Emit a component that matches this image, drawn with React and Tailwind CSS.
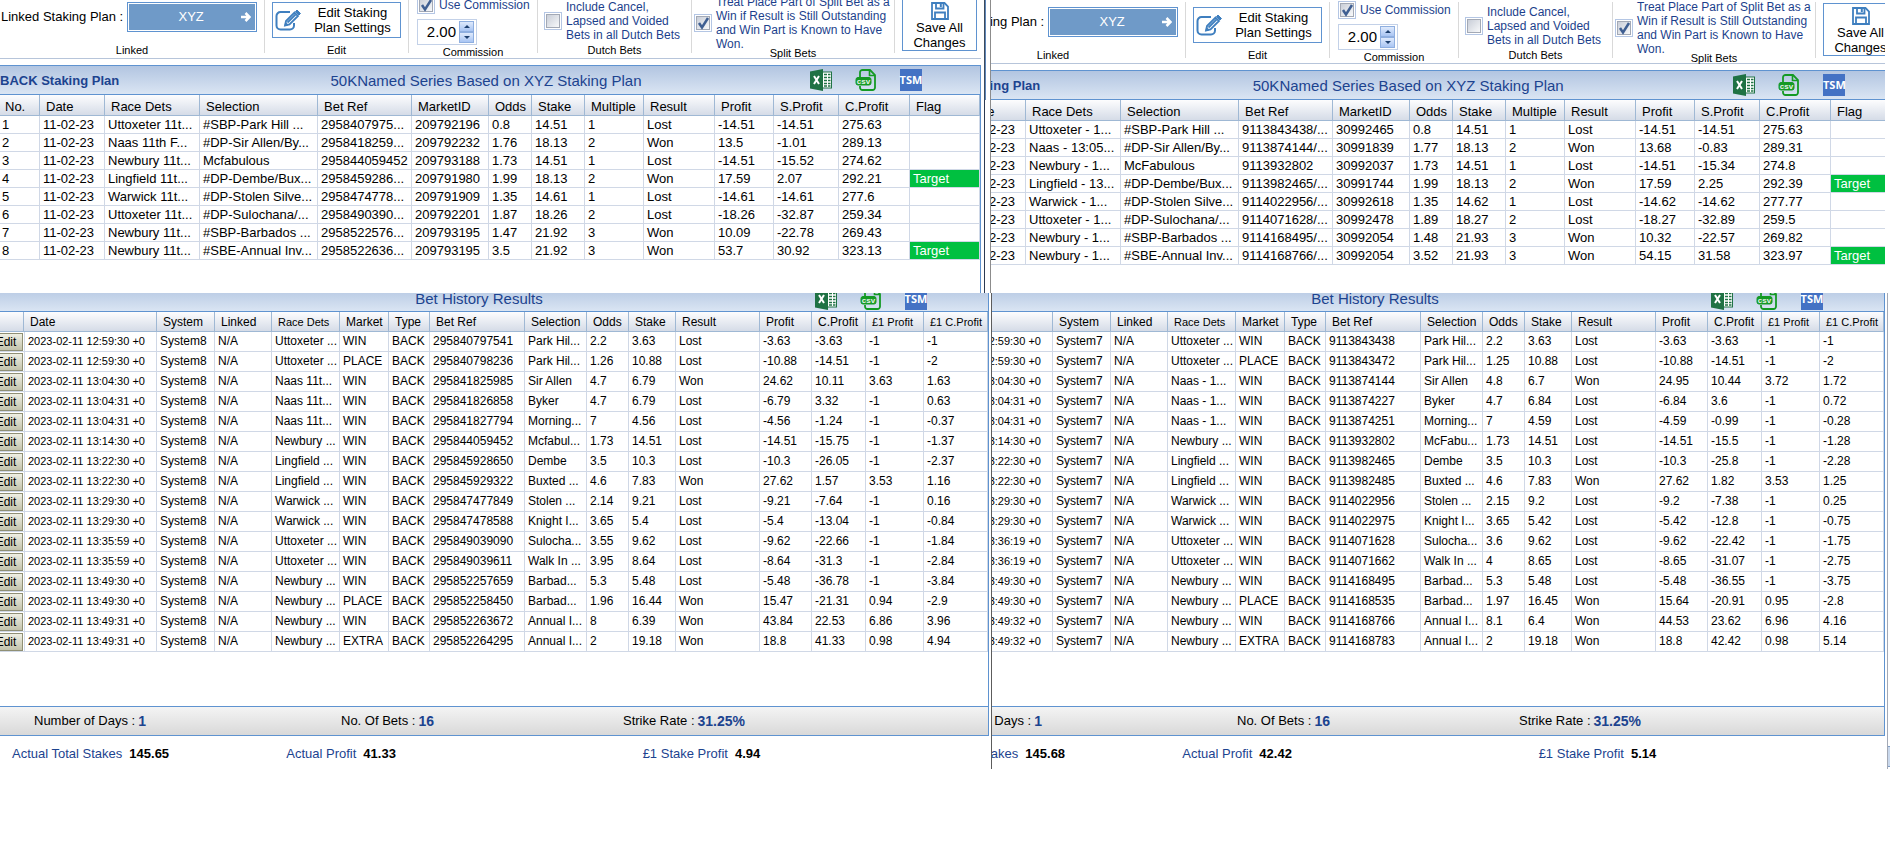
import { useState } from 'react'
import clsx from 'clsx'

const planCols = [
  { label: 'No.', width: 'w-[40px]' },
  { label: 'Date', width: 'w-[65px]' },
  { label: 'Race Dets', width: 'w-[95px]' },
  { label: 'Selection', width: 'w-[118px]' },
  { label: 'Bet Ref', width: 'w-[94px]' },
  { label: 'MarketID', width: 'w-[77px]' },
  { label: 'Odds', width: 'w-[43px]' },
  { label: 'Stake', width: 'w-[53px]' },
  { label: 'Multiple', width: 'w-[59px]' },
  { label: 'Result', width: 'w-[71px]' },
  { label: 'Profit', width: 'w-[59px]' },
  { label: 'S.Profit', width: 'w-[65px]' },
  { label: 'C.Profit', width: 'w-[71px]' },
  { label: 'Flag', width: '' },
]

const historyCols = [
  { label: '', width: 'w-[24px]' },
  { label: 'Date', width: 'w-[133px]' },
  { label: 'System', width: 'w-[58px]' },
  { label: 'Linked', width: 'w-[57px]' },
  { label: 'Race Dets', width: 'w-[68px]', small: true },
  { label: 'Market', width: 'w-[49px]' },
  { label: 'Type', width: 'w-[41px]' },
  { label: 'Bet Ref', width: 'w-[95px]' },
  { label: 'Selection', width: 'w-[62px]' },
  { label: 'Odds', width: 'w-[42px]' },
  { label: 'Stake', width: 'w-[47px]' },
  { label: 'Result', width: 'w-[84px]' },
  { label: 'Profit', width: 'w-[52px]' },
  { label: 'C.Profit', width: 'w-[54px]' },
  { label: '£1 Profit', width: 'w-[58px]', small: true },
  { label: '£1 C.Profit', width: '', small: true },
]

const planA = [
  ['1', '11-02-23', 'Uttoxeter 11t...', '#SBP-Park Hill ...', '2958407975...', '209792196', '0.8', '14.51', '1', 'Lost', '-14.51', '-14.51', '275.63', ''],
  ['2', '11-02-23', 'Naas 11th F...', '#DP-Sir Allen/By...', '2958418259...', '209792232', '1.76', '18.13', '2', 'Won', '13.5', '-1.01', '289.13', ''],
  ['3', '11-02-23', 'Newbury 11t...', 'Mcfabulous', '295844059452', '209793188', '1.73', '14.51', '1', 'Lost', '-14.51', '-15.52', '274.62', ''],
  ['4', '11-02-23', 'Lingfield 11t...', '#DP-Dembe/Bux...', '2958459286...', '209791980', '1.99', '18.13', '2', 'Won', '17.59', '2.07', '292.21', 'Target'],
  ['5', '11-02-23', 'Warwick 11t...', '#DP-Stolen Silve...', '2958474778...', '209791909', '1.35', '14.61', '1', 'Lost', '-14.61', '-14.61', '277.6', ''],
  ['6', '11-02-23', 'Uttoxeter 11t...', '#DP-Sulochana/...', '2958490390...', '209792201', '1.87', '18.26', '2', 'Lost', '-18.26', '-32.87', '259.34', ''],
  ['7', '11-02-23', 'Newbury 11t...', '#SBP-Barbados ...', '2958522576...', '209793195', '1.47', '21.92', '3', 'Won', '10.09', '-22.78', '269.43', ''],
  ['8', '11-02-23', 'Newbury 11t...', '#SBE-Annual Inv...', '2958522636...', '209793195', '3.5', '21.92', '3', 'Won', '53.7', '30.92', '323.13', 'Target'],
]

const planB = [
  ['1', '11-02-23', 'Uttoxeter - 1...', '#SBP-Park Hill ...', '9113843438/...', '30992465', '0.8', '14.51', '1', 'Lost', '-14.51', '-14.51', '275.63', ''],
  ['2', '11-02-23', 'Naas - 13:05...', '#DP-Sir Allen/By...', '9113874144/...', '30991839', '1.77', '18.13', '2', 'Won', '13.68', '-0.83', '289.31', ''],
  ['3', '11-02-23', 'Newbury - 1...', 'McFabulous', '9113932802', '30992037', '1.73', '14.51', '1', 'Lost', '-14.51', '-15.34', '274.8', ''],
  ['4', '11-02-23', 'Lingfield - 13...', '#DP-Dembe/Bux...', '9113982465/...', '30991744', '1.99', '18.13', '2', 'Won', '17.59', '2.25', '292.39', 'Target'],
  ['5', '11-02-23', 'Warwick - 1...', '#DP-Stolen Silve...', '9114022956/...', '30992618', '1.35', '14.62', '1', 'Lost', '-14.62', '-14.62', '277.77', ''],
  ['6', '11-02-23', 'Uttoxeter - 1...', '#DP-Sulochana/...', '9114071628/...', '30992478', '1.89', '18.27', '2', 'Lost', '-18.27', '-32.89', '259.5', ''],
  ['7', '11-02-23', 'Newbury - 1...', '#SBP-Barbados ...', '9114168495/...', '30992054', '1.48', '21.93', '3', 'Won', '10.32', '-22.57', '269.82', ''],
  ['8', '11-02-23', 'Newbury - 1...', '#SBE-Annual Inv...', '9114168766/...', '30992054', '3.52', '21.93', '3', 'Won', '54.15', '31.58', '323.97', 'Target'],
]

// time, race, market, bet ref, selection, odds, stake, result, profit, c.profit, £1 profit, £1 c.profit
const historyA = [
  ['12:59:30', 'Uttoxeter ...', 'WIN', '295840797541', 'Park Hil...', '2.2', '3.63', 'Lost', '-3.63', '-3.63', '-1', '-1'],
  ['12:59:30', 'Uttoxeter ...', 'PLACE', '295840798236', 'Park Hil...', '1.26', '10.88', 'Lost', '-10.88', '-14.51', '-1', '-2'],
  ['13:04:30', 'Naas 11t...', 'WIN', '295841825985', 'Sir Allen', '4.7', '6.79', 'Won', '24.62', '10.11', '3.63', '1.63'],
  ['13:04:31', 'Naas 11t...', 'WIN', '295841826858', 'Byker', '4.7', '6.79', 'Lost', '-6.79', '3.32', '-1', '0.63'],
  ['13:04:31', 'Naas 11t...', 'WIN', '295841827794', 'Morning...', '7', '4.56', 'Lost', '-4.56', '-1.24', '-1', '-0.37'],
  ['13:14:30', 'Newbury ...', 'WIN', '295844059452', 'Mcfabul...', '1.73', '14.51', 'Lost', '-14.51', '-15.75', '-1', '-1.37'],
  ['13:22:30', 'Lingfield ...', 'WIN', '295845928650', 'Dembe', '3.5', '10.3', 'Lost', '-10.3', '-26.05', '-1', '-2.37'],
  ['13:22:30', 'Lingfield ...', 'WIN', '295845929322', 'Buxted ...', '4.6', '7.83', 'Won', '27.62', '1.57', '3.53', '1.16'],
  ['13:29:30', 'Warwick ...', 'WIN', '295847477849', 'Stolen ...', '2.14', '9.21', 'Lost', '-9.21', '-7.64', '-1', '0.16'],
  ['13:29:30', 'Warwick ...', 'WIN', '295847478588', 'Knight I...', '3.65', '5.4', 'Lost', '-5.4', '-13.04', '-1', '-0.84'],
  ['13:35:59', 'Uttoxeter ...', 'WIN', '295849039090', 'Sulocha...', '3.55', '9.62', 'Lost', '-9.62', '-22.66', '-1', '-1.84'],
  ['13:35:59', 'Uttoxeter ...', 'WIN', '295849039611', 'Walk In ...', '3.95', '8.64', 'Lost', '-8.64', '-31.3', '-1', '-2.84'],
  ['13:49:30', 'Newbury ...', 'WIN', '295852257659', 'Barbad...', '5.3', '5.48', 'Lost', '-5.48', '-36.78', '-1', '-3.84'],
  ['13:49:30', 'Newbury ...', 'PLACE', '295852258450', 'Barbad...', '1.96', '16.44', 'Won', '15.47', '-21.31', '0.94', '-2.9'],
  ['13:49:31', 'Newbury ...', 'WIN', '295852263672', 'Annual I...', '8', '6.39', 'Won', '43.84', '22.53', '6.86', '3.96'],
  ['13:49:31', 'Newbury ...', 'EXTRA', '295852264295', 'Annual I...', '2', '19.18', 'Won', '18.8', '41.33', '0.98', '4.94'],
]

const historyB = [
  ['12:59:30', 'Uttoxeter ...', 'WIN', '9113843438', 'Park Hil...', '2.2', '3.63', 'Lost', '-3.63', '-3.63', '-1', '-1'],
  ['12:59:30', 'Uttoxeter ...', 'PLACE', '9113843472', 'Park Hil...', '1.25', '10.88', 'Lost', '-10.88', '-14.51', '-1', '-2'],
  ['13:04:30', 'Naas - 1...', 'WIN', '9113874144', 'Sir Allen', '4.8', '6.7', 'Won', '24.95', '10.44', '3.72', '1.72'],
  ['13:04:31', 'Naas - 1...', 'WIN', '9113874227', 'Byker', '4.7', '6.84', 'Lost', '-6.84', '3.6', '-1', '0.72'],
  ['13:04:31', 'Naas - 1...', 'WIN', '9113874251', 'Morning...', '7', '4.59', 'Lost', '-4.59', '-0.99', '-1', '-0.28'],
  ['13:14:30', 'Newbury ...', 'WIN', '9113932802', 'McFabu...', '1.73', '14.51', 'Lost', '-14.51', '-15.5', '-1', '-1.28'],
  ['13:22:30', 'Lingfield ...', 'WIN', '9113982465', 'Dembe', '3.5', '10.3', 'Lost', '-10.3', '-25.8', '-1', '-2.28'],
  ['13:22:30', 'Lingfield ...', 'WIN', '9113982485', 'Buxted ...', '4.6', '7.83', 'Won', '27.62', '1.82', '3.53', '1.25'],
  ['13:29:30', 'Warwick ...', 'WIN', '9114022956', 'Stolen ...', '2.15', '9.2', 'Lost', '-9.2', '-7.38', '-1', '0.25'],
  ['13:29:30', 'Warwick ...', 'WIN', '9114022975', 'Knight I...', '3.65', '5.42', 'Lost', '-5.42', '-12.8', '-1', '-0.75'],
  ['13:36:19', 'Uttoxeter ...', 'WIN', '9114071628', 'Sulocha...', '3.6', '9.62', 'Lost', '-9.62', '-22.42', '-1', '-1.75'],
  ['13:36:19', 'Uttoxeter ...', 'WIN', '9114071662', 'Walk In ...', '4', '8.65', 'Lost', '-8.65', '-31.07', '-1', '-2.75'],
  ['13:49:30', 'Newbury ...', 'WIN', '9114168495', 'Barbad...', '5.3', '5.48', 'Lost', '-5.48', '-36.55', '-1', '-3.75'],
  ['13:49:30', 'Newbury ...', 'PLACE', '9114168535', 'Barbad...', '1.97', '16.45', 'Won', '15.64', '-20.91', '0.95', '-2.8'],
  ['13:49:32', 'Newbury ...', 'WIN', '9114168766', 'Annual I...', '8.1', '6.4', 'Won', '44.53', '23.62', '6.96', '4.16'],
  ['13:49:32', 'Newbury ...', 'EXTRA', '9114168783', 'Annual I...', '2', '19.18', 'Won', '18.8', '42.42', '0.98', '5.14'],
]

function ExcelIcon() {
  return (
    <svg className="w-[22px] h-[22px]" viewBox="0 0 22 22">
      <rect x="12" y="3" width="9.5" height="16" fill="#fff" stroke="#217346" />
      <path d="M14 5.5h3M18 5.5h2.5M14 8.5h3M18 8.5h2.5M14 11.5h3M18 11.5h2.5M14 14.5h3M18 14.5h2.5M14 17h3M18 17h2.5" stroke="#217346" strokeWidth="1.6" />
      <path d="M0 2.5 13 0v22L0 19.5z" fill="#1f7244" />
      <path d="M4 7l5 8M9 7l-5 8" stroke="#fff" strokeWidth="2" />
    </svg>
  )
}

function CsvIcon() {
  return (
    <svg className="w-[22px] h-[22px]" viewBox="0 0 22 22" fill="none" stroke="#149a24">
      <path d="M5 8V3.500A2.500 2.500 0 0 1 7.500 1H15l5 5v12.500A2.500 2.500 0 0 1 17.500 21H7.500A2.500 2.500 0 0 1 5 18.500V17" strokeWidth="1.800" />
      <path d="M14.500 1v5.500H20" strokeWidth="1.600" />
      <rect x="1" y="8.500" width="15" height="7.500" rx="2" fill="#149a24" />
      <text x="8.500" y="15" textAnchor="middle" fontSize="8" fontWeight="bold" fill="#e6f3e8" stroke="none" fontFamily="Liberation Sans, sans-serif">csv</text>
    </svg>
  )
}

function EditIcon() {
  return (
    <svg className="w-[26px] h-[22px]" viewBox="0 0 26 22" fill="none" stroke="#3f7fbf">
      <path d="M15 3H5.500A4 4 0 0 0 1.500 7v9.500a4 4 0 0 0 4 4H15a4 4 0 0 0 4-4V14" strokeWidth="2" />
      <path d="M10 16.500 11 12 19.500 3.500l3.500 3.500-8.500 8.500z" strokeWidth="1.800" />
      <path d="M12.500 13.500 20.500 5.500" strokeWidth="1.800" />
      <path d="M20.500 2.500 22 1l3.500 3.500L24 6z" fill="#3f7fbf" />
      <path d="M10 16.500l.7-3 2.300 2.300z" fill="#3f7fbf" />
    </svg>
  )
}

function SaveIcon() {
  return (
    <svg className="w-[18px] h-[18px]" viewBox="0 0 18 18" fill="none" stroke="#3f7fbf" strokeWidth="1.800">
      <path d="M1 1h12.500L17 4.500V17H1z" />
      <path d="M5 1v5.500h7.500V1" />
      <path d="M9.800 2v3" strokeWidth="2" />
      <path d="M4 17v-6.500h10V17" />
    </svg>
  )
}

function ExportButtons() {
  return (
    <>
      <button aria-label="Export to Excel"><ExcelIcon /></button>
      <button aria-label="Export to CSV"><CsvIcon /></button>
      <button className="w-[22px] h-[22px] bg-[#4472c4] text-white text-[11px] leading-[22px] font-bold font-['Open_Sans',sans-serif] flex justify-center">TSM</button>
    </>
  )
}

function CheckBox({ defaultChecked, children, className }) {
  return (
    <label className={clsx('flex items-center gap-1 text-[12px] leading-[14px] text-[#1c3f8c]', className)}>
      <span className="relative shrink-0 w-[18px] h-[18px] border border-[#b4c6e4] bg-white p-px">
        <input
          type="checkbox"
          defaultChecked={defaultChecked}
          className="peer block appearance-none w-[14px] h-[14px] border border-[#a3a9b5] bg-gradient-to-br from-[#c9ced8] to-[#f8f9fa]"
        />
        <svg className="hidden peer-checked:block pointer-events-none absolute left-0 top-0 w-4 h-4" viewBox="0 0 16 16" fill="none" stroke="#3f5f92" strokeWidth="2.500">
          <path d="M4 8l3 4.500L13 3" />
        </svg>
      </span>
      <span>{children}</span>
    </label>
  )
}

function Group({ caption, width, children }) {
  return (
    <div className={clsx('flex flex-col shrink-0', width)}>
      <div className="h-[51px]">{children}</div>
      <div className="text-[11px] leading-[15px] text-center">{caption}</div>
    </div>
  )
}

function Separator() {
  return <div className="w-px h-[56px] mt-[2px] shrink-0 bg-[#d9d9d9]"></div>
}

function Ribbon() {
  const [commission, setCommission] = useState(2)

  return (
    <div className="flex h-[64px] border-b border-[#b7c5da] text-[13px] whitespace-nowrap">
      <Group caption="Linked" width="w-[264px]">
        <div className="flex items-center gap-[4px] pl-px pt-[7px]">
          <span>Linked Staking Plan :</span>
          <button className="flex items-center w-[130px] h-[30px] border border-[#5f93d0] p-px bg-white text-white">
            <span className="flex items-center w-full h-full bg-[#6f9ac8] pr-1">
              <span className="flex-1 pl-[12px]">XYZ</span>
              <svg className="w-[10px] h-[10px]" viewBox="0 0 10 10" fill="none" stroke="#fff" strokeWidth="2.500">
                <path d="M0 5h8.500M4.500 1l4 4-4 4" />
              </svg>
            </span>
          </button>
        </div>
      </Group>
      <Separator />
      <Group caption="Edit" width="w-[143px]">
        <button className="flex items-center ml-[7px] mt-[7px] w-[129px] h-[36px] border border-[#5f93d0] pl-[2px] leading-[15px]">
          <EditIcon />
          <span className="flex-1 pl-1">Edit Staking<br />Plan Settings</span>
        </button>
      </Group>
      <Separator />
      <Group caption="Commission" width="w-[128px]">
        <div className="pl-[8px] pt-px">
          <CheckBox defaultChecked>Use Commission</CheckBox>
          <div className="flex items-center mt-[5px] w-[60px] h-[26px] border border-[#c3d1e8] pr-px">
            <input
              aria-label="Commission"
              className="w-[38px] text-right text-[15px] leading-5 outline-none"
              value={commission.toFixed(2)}
              onChange={(e) => setCommission(Number(e.target.value) || 0)}
            />
            <span className="flex flex-col ml-[3px] w-[15px]">
              <button aria-label="Increase" onClick={() => setCommission(commission + 1)} className="flex items-center justify-center h-[11px] border border-[#8fafe0] bg-gradient-to-b from-[#dfeafc] to-[#a9c5f3]">
                <svg className="w-[6px] h-[3px]" viewBox="0 0 6 3" fill="#1d3f6e"><path d="M0 3 3 0l3 3z" /></svg>
              </button>
              <button aria-label="Decrease" onClick={() => setCommission(commission - 1)} className="flex items-center justify-center h-[11px] border border-[#8fafe0] bg-gradient-to-b from-[#dfeafc] to-[#a9c5f3]">
                <svg className="w-[6px] h-[3px]" viewBox="0 0 6 3" fill="#1d3f6e"><path d="M0 0l3 3 3-3z" /></svg>
              </button>
            </span>
          </div>
        </div>
      </Group>
      <Separator />
      <Group caption="Dutch Bets" width="w-[153px]">
        <CheckBox className="pl-[6px] pt-[5px]">Include Cancel,<br />Lapsed and Voided<br />Bets in all Dutch Bets</CheckBox>
      </Group>
      <Separator />
      <Group caption="Split Bets" width="w-[202px]">
        <CheckBox defaultChecked className="pl-[2px]">
          Treat Place Part of Split Bet as a<br />Win if Result is Still Outstanding<br />and Win Part is Known to Have<br />Won.
        </CheckBox>
      </Group>
      <Separator />
      <button className="flex flex-col items-center shrink-0 ml-[7px] mt-[3px] w-[75px] h-[53px] border border-[#5f93d0] pt-[3px] leading-[15px]">
        <SaveIcon />
        <span>Save All<br />Changes</span>
      </button>
    </div>
  )
}

function HeadRow({ cols, className, first }) {
  return (
    <thead>
      <tr className={clsx('bg-gradient-to-b from-[#fdfdfe] to-[#d3dae6]', className)}>
        {cols.map((col) => (
          <th
            key={col.label}
            className={clsx(
              'border-r border-b border-[#9fb8d4] p-0 pt-[2px] text-left font-normal overflow-hidden whitespace-nowrap',
              col.label === first ? 'pl-[5px]' : 'pl-[6px]',
              col.small && 'text-[11px]',
              col.width
            )}
          >
            {col.label}
          </th>
        ))}
      </tr>
    </thead>
  )
}

function StakingPlan({ rows }) {
  return (
    <div className="flex flex-col flex-1 min-w-0">
      <Ribbon />
      <div className="flex-1 mt-[6px] pb-7 border-t border-r border-[#5f93d0]">
        <div className="grid grid-cols-[1fr_auto_1fr] items-center h-[29px] pr-2 border-b border-[#5f93d0] bg-gradient-to-b from-[#b2c5e1] to-[#dae5f3] text-[#1c438f]">
          <h2 className="pt-[2px] text-[13px] font-bold">BACK Staking Plan</h2>
          <h1 className="pt-[2px] text-[15px]">50KNamed Series Based on XYZ Staking Plan</h1>
          <div className="flex justify-end gap-[23px] pr-[50px]">
            <ExportButtons />
          </div>
        </div>
        <table className="table-fixed w-full border-separate border-spacing-0 text-[13px] leading-[17px]">
          <HeadRow cols={planCols} first="No." className="h-[21px]" />
          <tbody>
            {rows.map((row) => (
              <tr key={row[0]} className="h-[18px]">
                {row.map((cell, i) => (
                  <td
                    key={i}
                    className={clsx(
                      'border-r border-b border-[#d0d8e6] p-0 overflow-hidden whitespace-nowrap',
                      i === 0 ? 'pl-[2px]' : 'pl-[3px]',
                      cell === 'Target' && 'bg-[#00c040] text-white'
                    )}
                  >
                    {cell}
                  </td>
                ))}
              </tr>
            ))}
          </tbody>
        </table>
      </div>
    </div>
  )
}

function Stat({ label, value }) {
  return (
    <div className="flex items-center gap-[7px]">
      <span className="text-[#1c438f]">{label}</span>
      <b>{value}</b>
    </div>
  )
}

function Summary({ label, value }) {
  return (
    <div className="flex items-center gap-[3px]">
      <span>{label} :</span>
      <b className="text-[14px] text-[#1c438f]">{value}</b>
    </div>
  )
}

function BetHistory({ system, rows, stakes, profit, pound }) {
  return (
    <div className="flex-1 min-w-0">
      <div className="border-r border-b border-[#5f93d0]">
        {/* title bar is scrolled partly out of view */}
        <div className="overflow-hidden">
          <div className="grid grid-cols-[1fr_auto_1fr] items-center -mt-[7px] h-[26px] pr-[30px] border-b border-[#5f93d0] bg-gradient-to-b from-[#b2c5e1] to-[#dae5f3] text-[#1c438f]">
            <span></span>
            <h2 className="pt-[2px] text-[15px]">Bet History Results</h2>
            <div className="flex justify-end gap-[23px] pr-[31px]">
              <ExportButtons />
            </div>
          </div>
        </div>
        <table className="table-fixed w-full border-separate border-spacing-0 text-[12px] leading-[19px]">
          <HeadRow cols={historyCols} className="h-[20px] leading-[17px]" />
          <tbody>
            {rows.map(([time, race, market, ...rest]) => {
              const cells = [`2023-02-11 ${time} +0`, system, 'N/A', race, market, 'BACK', ...rest]
              return (
                <tr key={rest[0]} className="h-[20px]">
                  <td className="border-b border-[#d0d8e6] p-0 overflow-hidden">
                    <button className="block -ml-[11px] w-[34px] h-[18px] border border-[#8f8f74] bg-gradient-to-b from-[#efefe3] to-[#c3c3ac] leading-4">Edit</button>
                  </td>
                  {cells.map((cell, i) => (
                    <td
                      key={i}
                      className={clsx(
                        'border-r border-b border-[#d0d8e6] p-0 pl-[3px] overflow-hidden whitespace-nowrap',
                        i === 0 && 'border-l pl-[2px] text-[11px]'
                      )}
                    >
                      {cell}
                    </td>
                  ))}
                </tr>
              )
            })}
          </tbody>
        </table>
        <div className="grid grid-cols-[307fr_282fr_365fr] mt-[54px] pl-[34px] h-[29px] border-t border-[#5f93d0] bg-gradient-to-b from-[#f4f4f4] to-[#d9d9d9] text-[13px]">
          <Summary label="Number of Days" value="1" />
          <Summary label="No. Of Bets" value="16" />
          <Summary label="Strike Rate" value="31.25%" />
        </div>
      </div>
      <div className="grid grid-cols-[274fr_356fr_346fr] pl-[12px] pt-[3px] h-[33px] text-[13px]">
        <Stat label="Actual Total Stakes" value={stakes} />
        <Stat label="Actual Profit" value={profit} />
        <Stat label="£1 Stake Profit" value={pound} />
      </div>
    </div>
  )
}

export default function App() {
  return (
    <div className="min-h-screen bg-white text-black overflow-hidden font-['Liberation_Sans',Arial,sans-serif]">
      <div className="grid grid-cols-[990fr_895fr_19fr]">
        <div className="flex overflow-hidden">
          <div className="flex flex-1 min-w-0 -mt-[5px]">
            <StakingPlan rows={planA} />
            <div className="w-[9px] shrink-0 flex flex-col pl-[3px]">
              <div className="h-[105px] w-[2px] bg-[#5f86b8] border-l border-[#3c4a5e]"></div>
              <div className="flex-1 w-px bg-[#2c3a52]"></div>
            </div>
          </div>
        </div>
        <div className="overflow-hidden border-l border-[#8c8c8c]">
          <div className="flex -ml-[70px] w-[110%]">
            <StakingPlan rows={planB} />
          </div>
        </div>
      </div>

      <div className="grid grid-cols-[991fr_894fr_19fr]">
        <div className="flex overflow-hidden pr-[2px]">
          <BetHistory system="System8" rows={historyA} stakes="145.65" profit="41.33" pound="4.94" />
        </div>
        <div className="overflow-hidden border-l border-[#5c5c5c]">
          <div className="flex -ml-[96px]">
            <BetHistory system="System7" rows={historyB} stakes="145.68" profit="42.42" pound="5.14" />
          </div>
        </div>
        <div className="flex flex-col justify-end ml-[2px] w-[3px] border-l border-[#a3a9b5]">
          <div className="h-[21px] mb-[2px] border-y border-[#7f9cc4] bg-[#c9d8ec]"></div>
        </div>
      </div>
    </div>
  )
}
